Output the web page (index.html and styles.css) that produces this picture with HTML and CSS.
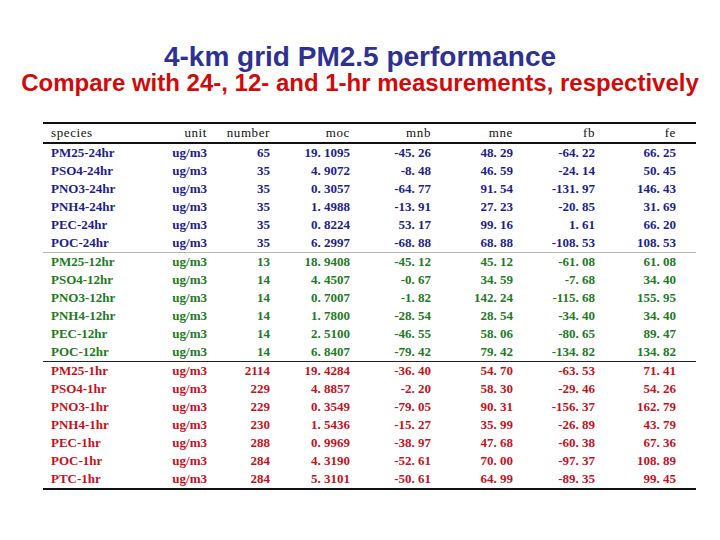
FILE: index.html
```html
<!DOCTYPE html>
<html>
<head>
<meta charset="utf-8">
<link rel="stylesheet" href="styles.css">
</head>
<body>
<div class="slide">
  <h1 class="title">4-km grid PM2.5 performance</h1>
  <h2 class="subtitle">Compare with 24-, 12- and 1-hr measurements, respectively</h2>
  <table class="stats">
    <colgroup>
      <col class="c-species"><col class="c-unit"><col class="c-number"><col class="c-moc">
      <col class="c-mnb"><col class="c-mne"><col class="c-fb"><col class="c-fe">
    </colgroup>
    <thead>
      <tr><th class="left">species</th><th>unit</th><th>number</th><th>moc</th><th>mnb</th><th>mne</th><th>fb</th><th>fe</th></tr>
    </thead>
    <tbody class="g24">
      <tr><td class="left">PM25-24hr</td><td>ug/m3</td><td>65</td><td>19. 1095</td><td>-45. 26</td><td>48. 29</td><td>-64. 22</td><td>66. 25</td></tr>
      <tr><td class="left">PSO4-24hr</td><td>ug/m3</td><td>35</td><td>4. 9072</td><td>-8. 48</td><td>46. 59</td><td>-24. 14</td><td>50. 45</td></tr>
      <tr><td class="left">PNO3-24hr</td><td>ug/m3</td><td>35</td><td>0. 3057</td><td>-64. 77</td><td>91. 54</td><td>-131. 97</td><td>146. 43</td></tr>
      <tr><td class="left">PNH4-24hr</td><td>ug/m3</td><td>35</td><td>1. 4988</td><td>-13. 91</td><td>27. 23</td><td>-20. 85</td><td>31. 69</td></tr>
      <tr><td class="left">PEC-24hr</td><td>ug/m3</td><td>35</td><td>0. 8224</td><td>53. 17</td><td>99. 16</td><td>1. 61</td><td>66. 20</td></tr>
      <tr><td class="left">POC-24hr</td><td>ug/m3</td><td>35</td><td>6. 2997</td><td>-68. 88</td><td>68. 88</td><td>-108. 53</td><td>108. 53</td></tr>
    </tbody>
    <tbody class="g12">
      <tr><td class="left">PM25-12hr</td><td>ug/m3</td><td>13</td><td>18. 9408</td><td>-45. 12</td><td>45. 12</td><td>-61. 08</td><td>61. 08</td></tr>
      <tr><td class="left">PSO4-12hr</td><td>ug/m3</td><td>14</td><td>4. 4507</td><td>-0. 67</td><td>34. 59</td><td>-7. 68</td><td>34. 40</td></tr>
      <tr><td class="left">PNO3-12hr</td><td>ug/m3</td><td>14</td><td>0. 7007</td><td>-1. 82</td><td>142. 24</td><td>-115. 68</td><td>155. 95</td></tr>
      <tr><td class="left">PNH4-12hr</td><td>ug/m3</td><td>14</td><td>1. 7800</td><td>-28. 54</td><td>28. 54</td><td>-34. 40</td><td>34. 40</td></tr>
      <tr><td class="left">PEC-12hr</td><td>ug/m3</td><td>14</td><td>2. 5100</td><td>-46. 55</td><td>58. 06</td><td>-80. 65</td><td>89. 47</td></tr>
      <tr><td class="left">POC-12hr</td><td>ug/m3</td><td>14</td><td>6. 8407</td><td>-79. 42</td><td>79. 42</td><td>-134. 82</td><td>134. 82</td></tr>
    </tbody>
    <tbody class="g1">
      <tr><td class="left">PM25-1hr</td><td>ug/m3</td><td>2114</td><td>19. 4284</td><td>-36. 40</td><td>54. 70</td><td>-63. 53</td><td>71. 41</td></tr>
      <tr><td class="left">PSO4-1hr</td><td>ug/m3</td><td>229</td><td>4. 8857</td><td>-2. 20</td><td>58. 30</td><td>-29. 46</td><td>54. 26</td></tr>
      <tr><td class="left">PNO3-1hr</td><td>ug/m3</td><td>229</td><td>0. 3549</td><td>-79. 05</td><td>90. 31</td><td>-156. 37</td><td>162. 79</td></tr>
      <tr><td class="left">PNH4-1hr</td><td>ug/m3</td><td>230</td><td>1. 5436</td><td>-15. 27</td><td>35. 99</td><td>-26. 89</td><td>43. 79</td></tr>
      <tr><td class="left">PEC-1hr</td><td>ug/m3</td><td>288</td><td>0. 9969</td><td>-38. 97</td><td>47. 68</td><td>-60. 38</td><td>67. 36</td></tr>
      <tr><td class="left">POC-1hr</td><td>ug/m3</td><td>284</td><td>4. 3190</td><td>-52. 61</td><td>70. 00</td><td>-97. 37</td><td>108. 89</td></tr>
      <tr><td class="left">PTC-1hr</td><td>ug/m3</td><td>284</td><td>5. 3101</td><td>-50. 61</td><td>64. 99</td><td>-89. 35</td><td>99. 45</td></tr>
    </tbody>
  </table>
</div>
</body>
</html>
```

FILE: styles.css
```css
html, body {
  margin: 0;
  padding: 0;
  background: #ffffff;
}
.slide {
  width: 720px;
  height: 540px;
  padding-top: 43px;
  box-sizing: border-box;
  display: flex;
  flex-direction: column;
  align-items: center;
}
.title {
  margin: 0;
  font-family: "Liberation Sans", Arial, sans-serif;
  font-weight: bold;
  font-size: 28px;
  line-height: 28px;
  color: #2e3192;
  text-align: center;
}
.subtitle {
  margin: 0;
  font-family: "Liberation Sans", Arial, sans-serif;
  font-weight: bold;
  font-size: 24px;
  line-height: 24px;
  color: #d10a0a;
  text-align: center;
  white-space: nowrap;
}
.stats {
  margin-top: 27px;
  align-self: flex-start;
  margin-left: 43px;
  border-collapse: collapse;
  table-layout: fixed;
  width: 653px;
  font-family: "Liberation Serif", "Times New Roman", serif;
  font-size: 13px;
  font-weight: bold;
}
.c-species { width: 97px; }
.c-unit { width: 67px; }
.c-number { width: 63px; }
.c-moc { width: 80px; }
.c-mnb { width: 81px; }
.c-mne { width: 82px; }
.c-fb { width: 82px; }
.c-fe { width: 101px; }
.stats th, .stats td {
  padding: 0;
  height: 18px;
  line-height: 18px;
  text-align: right;
  white-space: nowrap;
}
.stats th:last-child, .stats td:last-child {
  padding-right: 20px;
}
.stats .left {
  text-align: left;
  padding-left: 8px;
}
.stats thead th {
  font-weight: normal;
  letter-spacing: 0.6px;
  color: #111111;
  border-top: 2px solid #111111;
  border-bottom: 2px solid #111111;
}
.g24 { color: #1d1d8f; }
.g12 { color: #237a23; }
.g1 { color: #c8101c; }
.g24 tr:last-child td { border-bottom: 1px solid #b5b5b5; }
.g12 tr:last-child td { border-bottom: 1px solid #222222; }
.g1 tr:last-child td { border-bottom: 2px solid #111111; }
```
